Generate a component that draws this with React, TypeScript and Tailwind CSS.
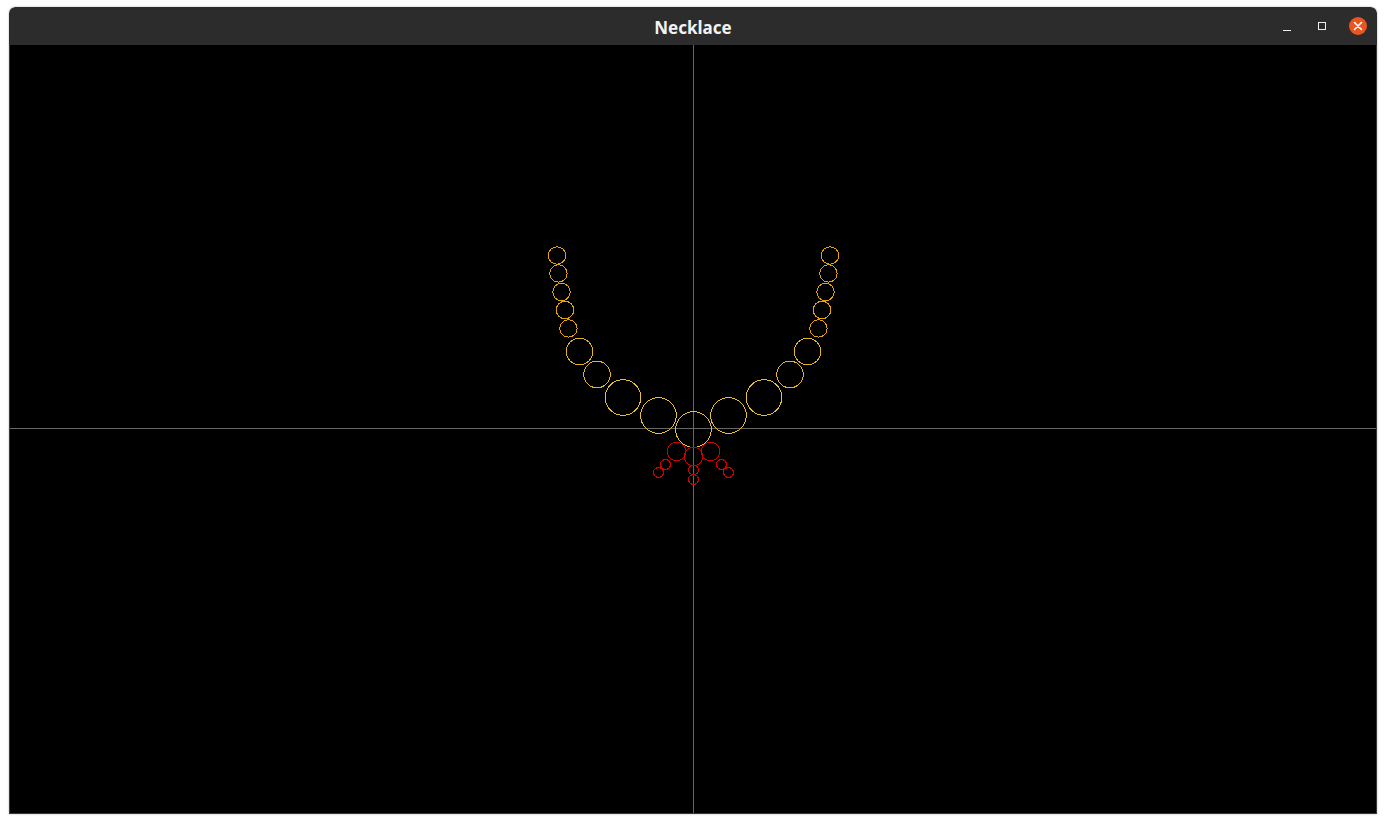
import React from "react";

type Bead = { x: number; y: number; r: number; c: string };

const GOLD_S = "#e6a400";
const GOLD_M = "#e3b51e";
const GOLD_L = "#e6c233";
const RED = "#d00000";

// left half of the necklace, page coordinates; right half is mirrored around x=693
const half: Bead[] = [
  { x: 556.5, y: 255, r: 8.7, c: GOLD_S },
  { x: 558, y: 273, r: 8.7, c: GOLD_S },
  { x: 561, y: 291.5, r: 8.7, c: GOLD_S },
  { x: 564.5, y: 309.5, r: 8.7, c: GOLD_S },
  { x: 568, y: 328, r: 8.7, c: GOLD_S },
  { x: 579, y: 351, r: 13.3, c: GOLD_M },
  { x: 596.5, y: 374, r: 13.3, c: GOLD_M },
  { x: 622.5, y: 397, r: 17.8, c: GOLD_L },
  { x: 658, y: 415, r: 17.8, c: GOLD_L },
  { x: 676, y: 451, r: 9.3, c: RED },
  { x: 665, y: 464, r: 5, c: RED },
  { x: 658, y: 472, r: 5, c: RED },
];

const middle: Bead[] = [
  { x: 693, y: 429, r: 17.8, c: GOLD_L },
  { x: 693, y: 456, r: 9.3, c: RED },
  { x: 693, y: 469.5, r: 5, c: RED },
  { x: 693, y: 479, r: 5, c: RED },
];

const beads: Bead[] = [
  ...half,
  ...half.map((b) => ({ ...b, x: 1386 - b.x })),
  ...middle,
];

function Necklace() {
  return (
    <svg
      width={1366}
      height={768}
      viewBox="10 45 1366 768"
      className="block"
      shapeRendering="crispEdges"
    >
      <line x1={693.5} y1={45} x2={693.5} y2={813} stroke="#666666" strokeWidth={1} />
      <line x1={10} y1={428.5} x2={1376} y2={428.5} stroke="#666666" strokeWidth={1} />
      {beads.map((b, i) => (
        <circle
          key={i}
          cx={b.x + 0.5}
          cy={b.y + 0.5}
          r={b.r}
          fill="none"
          stroke={b.c}
          strokeWidth={1}
        />
      ))}
    </svg>
  );
}

function TitleBar() {
  return (
    <div className="relative flex h-[38px] items-center justify-center rounded-t-[6px] bg-[#2c2c2c]">
      <span
        className="pt-[3px] text-[17px] font-bold text-[#f2f2f2]"
        style={{ fontFamily: '"Noto Sans", "Open Sans", sans-serif' }}
      >
        Necklace
      </span>
      <div className="absolute right-[10px] top-0 flex h-full items-center gap-[19px]">
        <div className="flex h-[16px] w-[16px] items-end justify-center pb-[3px]">
          <div className="h-px w-[8px] bg-[#eeeeee]" />
        </div>
        <div className="flex h-[16px] w-[16px] items-center justify-center">
          <div className="h-[8px] w-[8px] border border-[#eeeeee]" />
        </div>
        <div className="flex h-[18px] w-[18px] items-center justify-center rounded-full bg-[#e95420]">
          <svg width="10" height="10" viewBox="0 0 10 10">
            <path d="M1.5 1.5 L8.5 8.5 M8.5 1.5 L1.5 8.5" stroke="#ffffff" strokeWidth={1.6} strokeLinecap="round" />
          </svg>
        </div>
      </div>
    </div>
  );
}

export default function App() {
  return (
    <div className="min-h-[823px] w-[1386px] bg-white pl-[9px] pt-[7px]">
      <div className="w-[1368px] overflow-hidden rounded-t-[6px] shadow-[0_0_2px_rgba(0,0,0,0.35)]">
        <TitleBar />
        <div className="border-x border-b border-[#3a3a3a] bg-black">
          <Necklace />
        </div>
      </div>
    </div>
  );
}
